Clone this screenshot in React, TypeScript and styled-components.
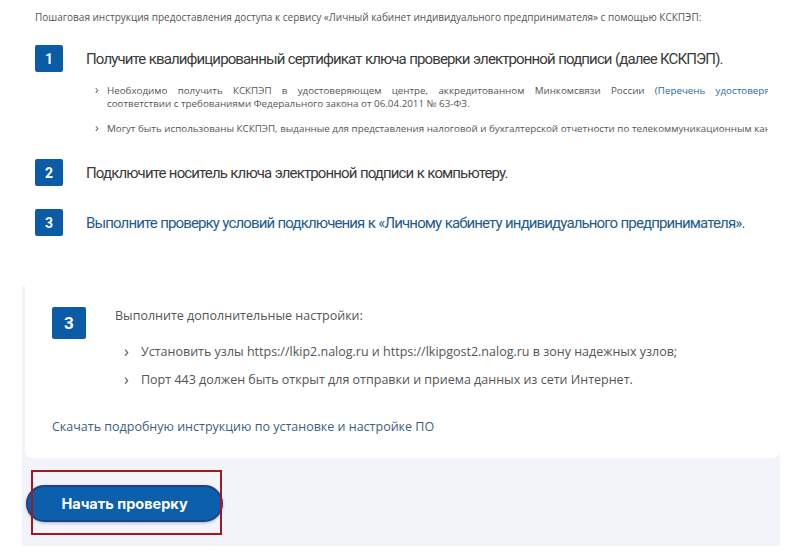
import React from "react";
import styled, { createGlobalStyle } from "styled-components";

const GlobalStyle = createGlobalStyle`
  html, body {
    margin: 0;
    padding: 0;
    background: #ffffff;
  }
  body {
    font-family: "Open Sans", "Noto Sans", sans-serif;
    color: #555555;
  }
`;

const Page = styled.div`
  width: 800px;
  height: 557px;
  overflow: hidden;
  background: #ffffff;
`;

const Top = styled.div`
  width: 745px;
  padding: 9px 0 0 35px;
  overflow: hidden;
`;

const Intro = styled.div`
  font-size: 10px;
  line-height: 16px;
  color: #555555;
  white-space: nowrap;
`;

const StepRow = styled.div<{ $top: number }>`
  display: flex;
  align-items: center;
  gap: 23px;
  margin-top: ${(p) => p.$top}px;
`;

const Badge = styled.div<{ $size?: number }>`
  flex: none;
  width: ${(p) => p.$size ?? 28}px;
  height: ${(p) => (p.$size ? p.$size - 2 : 27)}px;
  border-radius: 2px;
  background: #0c5ba6;
  color: #ffffff;
  display: flex;
  align-items: center;
  justify-content: center;
  font-family: Roboto, "Open Sans", sans-serif;
  font-weight: 700;
  font-size: ${(p) => (p.$size ? 17 : 14)}px;
`;

// condensed look: the site font is narrow, Roboto squeezed by letter-spacing
const Heading = styled.div<{ $link?: boolean }>`
  font-family: Roboto, "Noto Sans", sans-serif;
  font-size: 15px;
  letter-spacing: -0.87px;
  word-spacing: 0.5px;
  color: ${(p) => (p.$link ? "#235b8c" : "#3a3a3a")};
  white-space: nowrap;
`;

const SubList = styled.ul`
  list-style: none;
  margin: 12px 0 0 60px;
  padding: 0;
  width: 673px;
  overflow: hidden;
`;

const SubItem = styled.li`
  position: relative;
  padding-left: 12px;
  font-size: 9.8px;
  line-height: 13px;
  color: #555555;
  margin-bottom: 12px;
  &::before {
    content: "›";
    position: absolute;
    left: 0;
    top: -1px;
    font-size: 12px;
    color: #555555;
  }
`;

const Clip = styled.span`
  display: block;
  width: 760px;
  white-space: nowrap;
`;

const JustLine = styled.span`
  display: block;
  width: 760px;
  text-align: justify;
  text-align-last: justify;
`;

const Link = styled.span`
  color: #2a6aab;
`;

const Panel = styled.div`
  margin: 50px 0 0 22px;
  width: 758px;
  height: 260px;
  background: #f2f4f9;
  padding-left: 3px;
  box-sizing: border-box;
`;

const Card = styled.div`
  background: #ffffff;
  border-radius: 0 0 8px 8px;
  padding: 21px 0 0 27px;
  height: 172px;
  box-sizing: border-box;
`;

const CardStep = styled.div`
  display: flex;
  align-items: flex-start;
  gap: 29px;
`;

const CardBody = styled.div``;

const CardTitle = styled.div`
  font-size: 12.5px;
  line-height: 18px;
  color: #555555;
`;

const CardList = styled.ul`
  list-style: none;
  margin: 18px 0 0 9px;
  padding: 0;
`;

const CardItem = styled.li`
  position: relative;
  padding-left: 17px;
  font-size: 12.5px;
  line-height: 18px;
  color: #555555;
  margin-bottom: 10px;
  &::before {
    content: "›";
    position: absolute;
    left: 0;
    top: -1px;
    font-size: 16px;
    color: #555555;
  }
`;

const Download = styled.div`
  margin-top: 19px;
  font-size: 12.5px;
  line-height: 18px;
  color: #3b5f82;
`;

const ButtonArea = styled.div`
  position: relative;
  padding: 27px 0 0 1px;
`;

const Highlight = styled.div`
  position: absolute;
  left: 6px;
  top: 12px;
  width: 187px;
  height: 61px;
  border: 2px solid #9b1b21;
  pointer-events: none;
`;

const StartButton = styled.button`
  width: 197px;
  height: 37px;
  border-radius: 19px;
  border: 2px solid #243f86;
  background: #0b5fab;
  color: #ffffff;
  font-family: Inter, "Open Sans", sans-serif;
  font-weight: 700;
  font-size: 14.5px;
  cursor: pointer;
  box-shadow: 0 1px 3px rgba(0, 60, 140, 0.35);
`;

export default function App() {
  return (
    <Page>
      <GlobalStyle />
      <Top>
        <Intro>
          Пошаговая инструкция предоставления доступа к сервису «Личный кабинет
          индивидуального предпринимателя» с помощью КСКПЭП:
        </Intro>
        <StepRow $top={20}>
          <Badge>1</Badge>
          <Heading>
            Получите квалифицированный сертификат ключа проверки электронной
            подписи (далее КСКПЭП).
          </Heading>
        </StepRow>
        <SubList>
          <SubItem>
            <JustLine>
              Необходимо получить КСКПЭП в удостоверяющем центре,
              аккредитованном Минкомсвязи России (<Link>Перечень удостоверяющих центров</Link>) в
            </JustLine>
            <Clip>
              соответствии с требованиями Федерального закона от 06.04.2011 №
              63-ФЗ.
            </Clip>
          </SubItem>
          <SubItem>
            <Clip>
              Могут быть использованы КСКПЭП, выданные для представления
              налоговой и бухгалтерской отчетности по телекоммуникационным
              каналам связи.
            </Clip>
          </SubItem>
        </SubList>
        <StepRow $top={12}>
          <Badge>2</Badge>
          <Heading>
            Подключите носитель ключа электронной подписи к компьютеру.
          </Heading>
        </StepRow>
        <StepRow $top={23}>
          <Badge>3</Badge>
          <Heading $link>
            Выполните проверку условий подключения к «Личному кабинету
            индивидуального предпринимателя».
          </Heading>
        </StepRow>
      </Top>
      <Panel>
        <Card>
          <CardStep>
            <Badge $size={34}>3</Badge>
            <CardBody>
              <CardTitle>Выполните дополнительные настройки:</CardTitle>
              <CardList>
                <CardItem>
                  Установить узлы https://lkip2.nalog.ru и
                  https://lkipgost2.nalog.ru в зону надежных узлов;
                </CardItem>
                <CardItem>
                  Порт 443 должен быть открыт для отправки и приема данных из
                  сети Интернет.
                </CardItem>
              </CardList>
            </CardBody>
          </CardStep>
          <Download>
            Скачать подробную инструкцию по установке и настройке ПО
          </Download>
        </Card>
        <ButtonArea>
          <StartButton>Начать проверку</StartButton>
          <Highlight />
        </ButtonArea>
      </Panel>
    </Page>
  );
}
